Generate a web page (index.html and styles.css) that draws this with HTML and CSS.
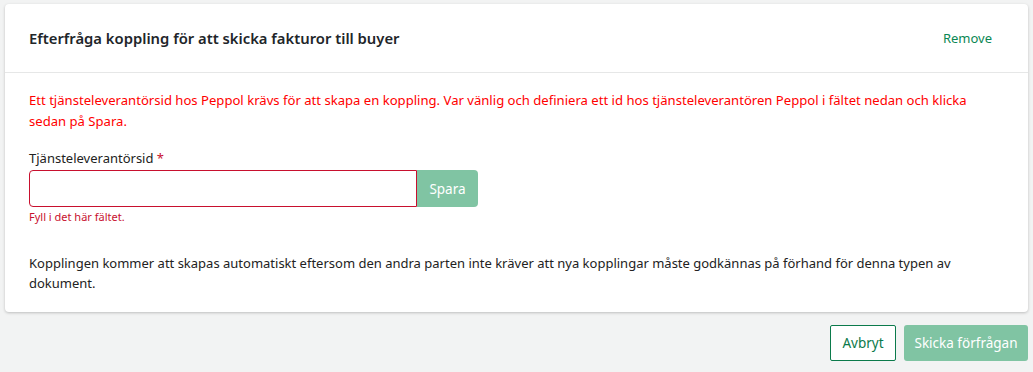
FILE: index.html
```html
<!DOCTYPE html>
<html lang="sv">
<head>
<meta charset="utf-8">
<title>Efterfråga koppling</title>
<link rel="stylesheet" href="styles.css">
</head>
<body>
<div class="card">
  <div class="card-header">
    <h2 class="title">Efterfråga koppling för att skicka fakturor till buyer</h2>
    <a class="remove" href="#">Remove</a>
  </div>
  <div class="card-body">
    <p class="warning">Ett tjänsteleverantörsid hos Peppol krävs för att skapa en koppling. Var vänlig och definiera ett id hos tjänsteleverantören Peppol i fältet nedan och klicka sedan på Spara.</p>
    <label class="label">Tjänsteleverantörsid <span class="req">*</span></label>
    <div class="input-row">
      <input class="input" type="text">
      <button class="btn-save">Spara</button>
    </div>
    <div class="error">Fyll i det här fältet.</div>
    <p class="info">Kopplingen kommer att skapas automatiskt eftersom den andra parten inte kräver att nya kopplingar måste godkännas på förhand för denna typen av dokument.</p>
  </div>
</div>
<div class="footer">
  <button class="btn-outline">Avbryt</button>
  <button class="btn-primary">Skicka förfrågan</button>
</div>
</body>
</html>
```
FILE: styles.css
```css
* { box-sizing: border-box; }
body {
  margin: 0;
  background: #f2f3f3;
  font-family: "Noto Sans", "Open Sans", sans-serif;
  font-size: 13px;
  color: #222;
}
.card {
  margin: 4px 5px 0 5px;
  background: #fff;
  border-radius: 4px;
  box-shadow: 0 1px 3px rgba(0,0,0,0.22);
}
.card-header {
  height: 69px;
  display: flex;
  align-items: center;
  justify-content: space-between;
  padding: 0 36px 0 24px;
  border-bottom: 1px solid #e6e7e7;
}
.title {
  margin: 0;
  font-size: 14.8px;
  font-weight: 600;
  color: #212529;
}
.remove {
  color: #0a8754;
  text-decoration: none;
  font-size: 13px;
}
.card-body {
  padding: 17px 24px 19px 24px;
}
.warning {
  margin: 0;
  max-width: 968px;
  color: #ff0000;
  line-height: 21px;
  font-size: 13.1px;
}
.label {
  display: block;
  margin-top: 16px;
  line-height: 20px;
}
.req { color: #c8102e; }
.input-row {
  display: flex;
  margin-top: 2px;
}
.input {
  width: 388px;
  height: 37px;
  border: 1px solid #c8102e;
  border-radius: 4px 0 0 4px;
  margin: 0;
  padding: 0 8px;
  font: inherit;
}
.btn-save {
  width: 61px;
  height: 37px;
  border: none;
  background: #80c4a3;
  color: #fff;
  border-radius: 0 4px 4px 0;
  font: inherit;
  font-size: 13.5px;
  margin: 0;
}
.error {
  margin-top: 2px;
  color: #c8102e;
  font-size: 11px;
  line-height: 16px;
}
.info {
  margin: 28px 0 0 0;
  line-height: 20px;
}
.footer {
  display: flex;
  justify-content: flex-end;
  gap: 8px;
  margin: 13px 5px 0 0;
}
.btn-outline {
  height: 36px;
  width: 66px;
  background: #fff;
  border: 1px solid #0b7a4b;
  border-radius: 2px;
  color: #0b7a4b;
  font: inherit;
  font-size: 13.5px;
}
.btn-primary {
  height: 36px;
  width: 124px;
  background: #80c4a3;
  border: none;
  border-radius: 3px;
  color: #fff;
  font: inherit;
  font-size: 13.5px;
}
```
